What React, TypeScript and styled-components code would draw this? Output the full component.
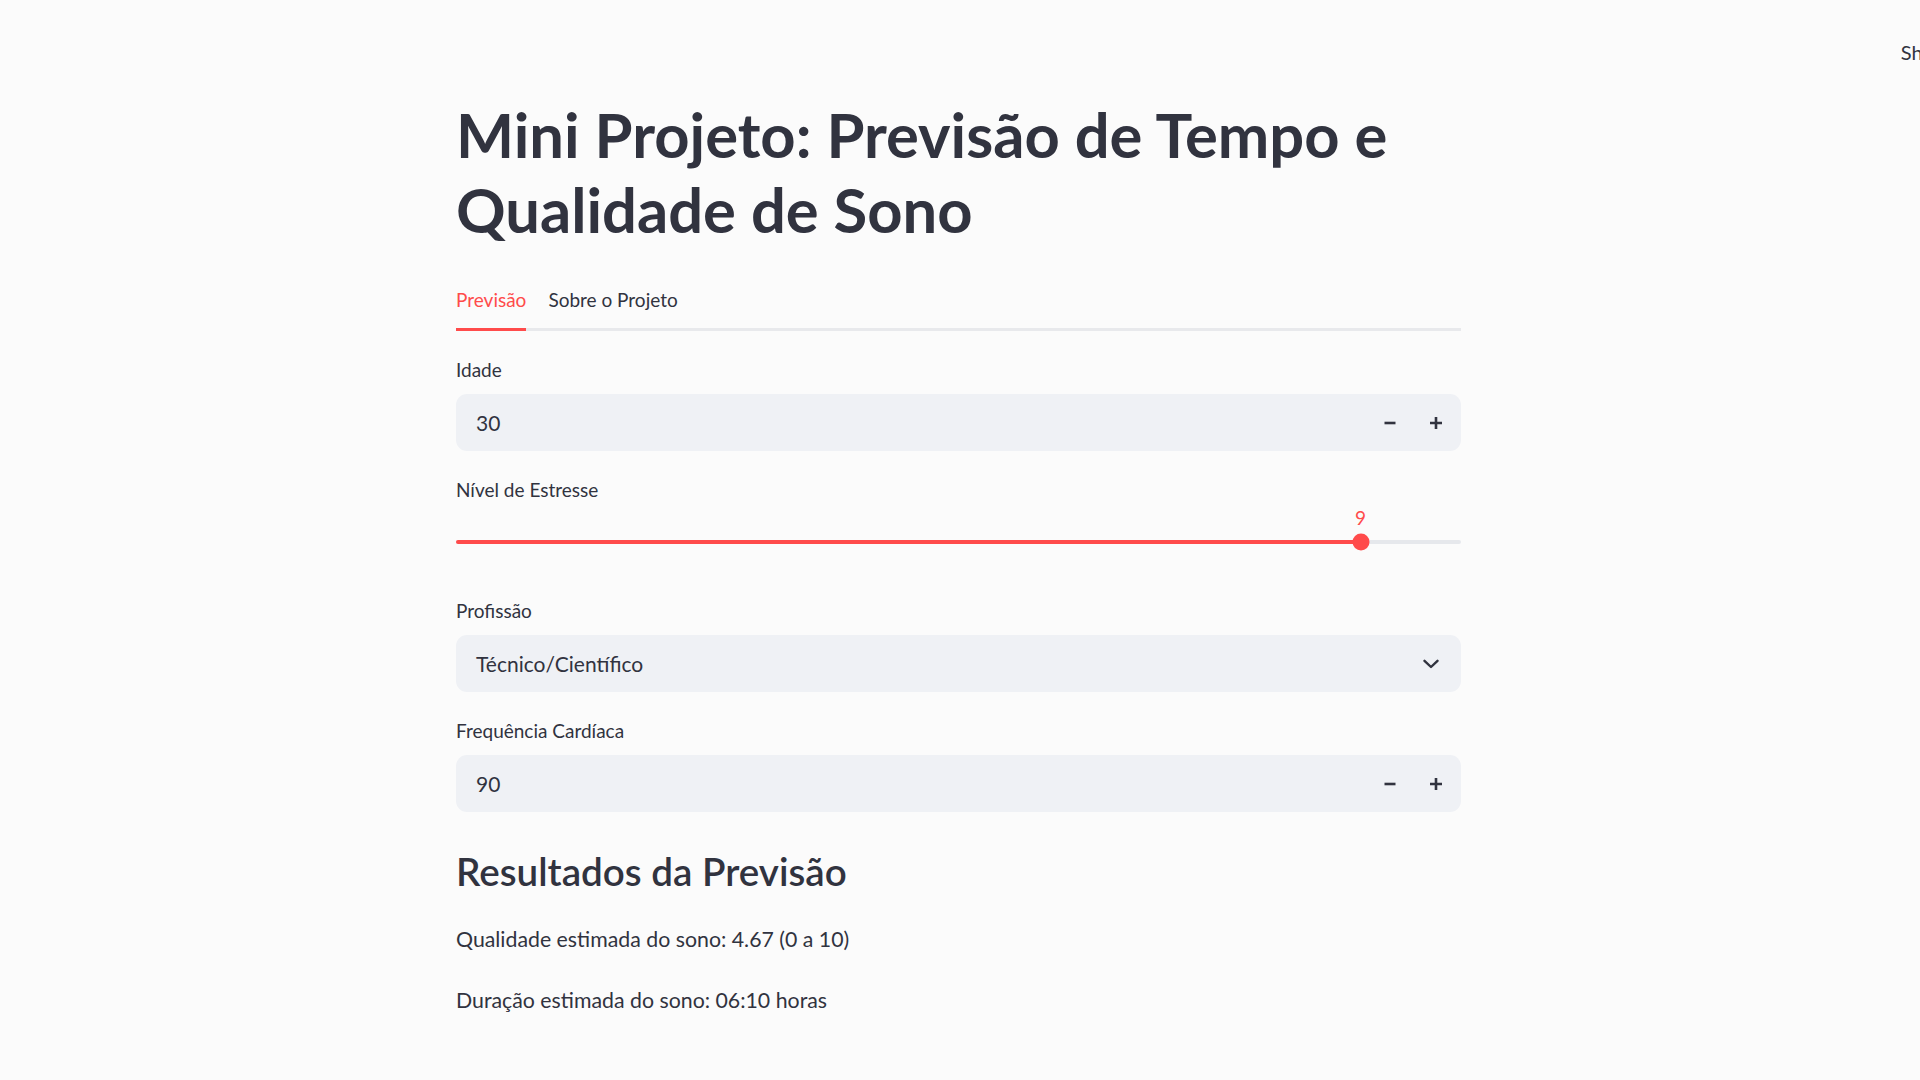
import React from "react";
import styled, { createGlobalStyle } from "styled-components";

const GlobalStyle = createGlobalStyle`
  html, body {
    margin: 0;
    padding: 0;
    background: #fbfbfb;
    overflow: hidden;
  }
  body {
    font-family: Lato, "Noto Sans", sans-serif;
    color: #31333f;
  }
  * { box-sizing: border-box; }
`;

const Page = styled.div`
  width: 1920px;
  height: 1080px;
  display: flex;
  flex-direction: column;
  overflow: hidden;
`;

const Header = styled.header`
  height: 86px;
  padding-top: 40px;
  display: flex;
  justify-content: flex-end;
  overflow: hidden;
`;

const ShareText = styled.span`
  font-size: 20px;
  line-height: 24px;
  color: #31333f;
  margin-right: -30px;
`;

const Main = styled.main`
  width: 1005px;
  margin: 0 0 0 456px;
  display: flex;
  flex-direction: column;
`;

const Title = styled.h1`
  margin: 11px 0 0;
  font-size: 61.5px;
  line-height: 75px;
  font-weight: 700;
  color: #31333f;
`;

const TabBar = styled.div`
  margin-top: 27px;
  display: flex;
  gap: 22px;
  border-bottom: 3px solid #e8e9ec;
`;

const Tab = styled.div<{ $active?: boolean }>`
  height: 40px;
  padding-top: 14px;
  font-size: 19px;
  line-height: 24px;
  color: ${(p) => (p.$active ? "#ff4b4b" : "#31333f")};
  border-bottom: 3px solid ${(p) => (p.$active ? "#ff4b4b" : "transparent")};
  margin-bottom: -3px;
  box-sizing: content-box;
`;

const Panel = styled.div`
  padding-top: 22px;
  display: flex;
  flex-direction: column;
  gap: 22px;
`;

const Field = styled.div`
  display: flex;
  flex-direction: column;
`;

const Label = styled.label`
  font-size: 19px;
  line-height: 34px;
  height: 34px;
  margin-bottom: 7px;
  color: #31333f;
`;

const InputBox = styled.div`
  height: 57px;
  border-radius: 11px;
  background: #eff1f5;
  display: flex;
  align-items: center;
  padding-left: 20px;
  padding-right: 2px;
`;

const InputValue = styled.span`
  flex: 1;
  font-size: 21px;
  color: #31333f;
`;

const StepButton = styled.button`
  width: 46px;
  height: 57px;
  border: none;
  background: transparent;
  display: flex;
  align-items: center;
  justify-content: center;
  padding: 0;
  color: #31333f;
`;

const SliderArea = styled.div`
  height: 58px;
  padding-top: 26px;
`;

const Track = styled.div`
  position: relative;
  height: 4px;
  border-radius: 2px;
  background: #e6e8ec;
`;

const Fill = styled.div`
  height: 100%;
  border-radius: 2px;
  background: #ff4b4b;
`;

const Thumb = styled.div`
  position: absolute;
  top: 50%;
  width: 17px;
  height: 17px;
  border-radius: 50%;
  background: #ff4b4b;
  transform: translate(-50%, -50%);
`;

const ThumbValue = styled.div`
  position: absolute;
  bottom: 14px;
  transform: translateX(-50%);
  font-size: 19px;
  line-height: 24px;
  color: #ff4b4b;
`;

const SelectBox = styled(InputBox)`
  padding-right: 22px;
`;

const ResultsTitle = styled.h3`
  margin: 35px 0 0;
  font-size: 38.6px;
  line-height: 48px;
  font-weight: 600;
  color: #31333f;
`;

const Para = styled.p<{ $gap: number }>`
  margin: ${(p) => p.$gap}px 0 0;
  font-size: 21.3px;
  line-height: 36.5px;
  color: #31333f;
`;

const Minus = () => (
  <svg width="14" height="14" viewBox="0 0 14 14">
    <path d="M1.5 7h11" stroke="#31333f" strokeWidth="2.6" strokeLinecap="butt" />
  </svg>
);

const Plus = () => (
  <svg width="14" height="14" viewBox="0 0 14 14">
    <path d="M1 7h12M7 1v12" stroke="#31333f" strokeWidth="2.6" strokeLinecap="butt" />
  </svg>
);

const Chevron = () => (
  <svg width="16" height="10" viewBox="0 0 16 10">
    <path d="M1.5 1.8L8 8l6.5-6.2" stroke="#31333f" strokeWidth="2.4" fill="none" strokeLinecap="round" strokeLinejoin="round" />
  </svg>
);

const NumberInput = ({ label, value }: { label: string; value: string }) => (
  <Field>
    <Label>{label}</Label>
    <InputBox>
      <InputValue>{value}</InputValue>
      <StepButton aria-label="decrement"><Minus /></StepButton>
      <StepButton aria-label="increment"><Plus /></StepButton>
    </InputBox>
  </Field>
);

export default function App() {
  const sliderPct = 90;
  return (
    <Page>
      <GlobalStyle />
      <Header>
        <ShareText>Share</ShareText>
      </Header>
      <Main>
        <Title>
          Mini Projeto: Previsão de Tempo e<br />Qualidade de Sono
        </Title>
        <TabBar>
          <Tab $active>Previsão</Tab>
          <Tab>Sobre o Projeto</Tab>
        </TabBar>
        <Panel>
          <NumberInput label="Idade" value="30" />
          <Field>
            <Label>Nível de Estresse</Label>
            <SliderArea>
              <Track>
                <Fill style={{ width: `${sliderPct}%` }} />
                <ThumbValue style={{ left: `${sliderPct}%` }}>9</ThumbValue>
                <Thumb style={{ left: `${sliderPct}%` }} />
              </Track>
            </SliderArea>
          </Field>
          <Field>
            <Label>Profissão</Label>
            <SelectBox>
              <InputValue>Técnico/Científico</InputValue>
              <Chevron />
            </SelectBox>
          </Field>
          <NumberInput label="Frequência Cardíaca" value="90" />
        </Panel>
        <ResultsTitle>Resultados da Previsão</ResultsTitle>
        <Para $gap={26}>Qualidade estimada do sono: 4.67 (0 a 10)</Para>
        <Para $gap={24}>Duração estimada do sono: 06:10 horas</Para>
      </Main>
    </Page>
  );
}
